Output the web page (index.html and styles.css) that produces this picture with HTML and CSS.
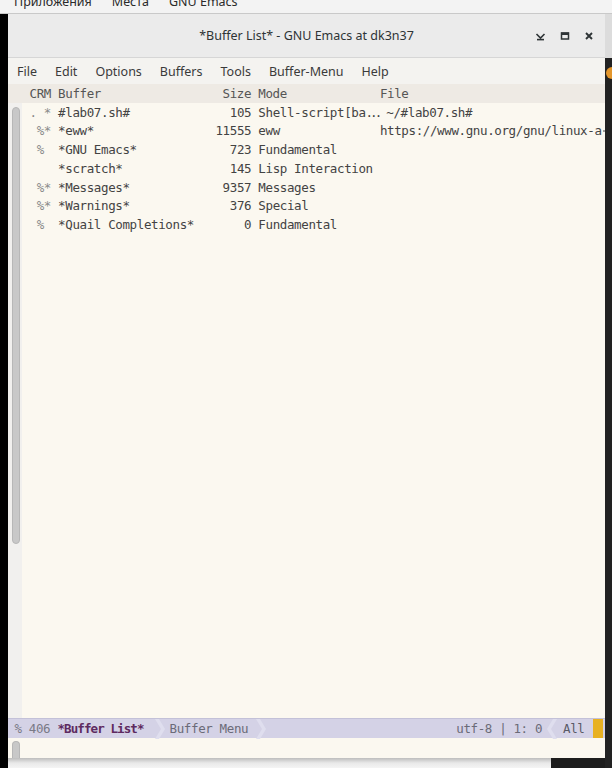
FILE: index.html
```html
<!DOCTYPE html>
<html>
<head>
<meta charset="utf-8">
<link rel="stylesheet" href="styles.css">
</head>
<body>
<div class="panel"><span>Приложения</span><span>Места</span><span>GNU Emacs</span></div>
<div class="desk">
  <div class="edge-left"></div>
  <div class="main">
    <div class="window">
      <div class="titlebar">
        <div></div>
        <div class="title">*Buffer List* - GNU Emacs at dk3n37</div>
        <div class="controls">
          <svg class="ctl" width="11" height="10" viewBox="0 0 11 10"><path d="M1.5 3 L5.5 7 L9.5 3" fill="none" stroke="#2e3436" stroke-width="1.6"/><path d="M2 8.6 H9" stroke="#2e3436" stroke-width="1.6"/></svg>
          <svg class="ctl" width="10" height="10" viewBox="0 0 10 10"><rect x="1.5" y="2" width="7" height="6" fill="none" stroke="#2e3436" stroke-width="1.5"/><rect x="1" y="1.5" width="8" height="2.5" fill="#2e3436"/></svg>
          <svg class="ctl" width="10" height="10" viewBox="0 0 10 10"><path d="M2 2 L8 8 M8 2 L2 8" stroke="#2e3436" stroke-width="1.9"/></svg>
        </div>
      </div>
      <div class="menubar">
        <span>File</span><span>Edit</span><span>Options</span><span>Buffers</span><span>Tools</span><span>Buffer-Menu</span><span>Help</span>
      </div>
      <div class="headerline"><pre class="mono">CRM Buffer                 Size Mode             File</pre></div>
      <div class="bodyrow">
        <div class="scroll"><div class="thumb"></div></div>
        <pre class="mono text"><span class="mk">. * </span>#lab07.sh#              105 Shell-script[ba<span class="ell">...</span> ~/#lab07.sh#
<span class="mk"> %* </span>*eww*                 11555 eww              https://www.gnu.org/gnu/linux-a<svg class="cont" width="6" height="8" viewBox="0 0 6 8"><path d="M0 4 H5 M2.6 1.6 L5 4 L2.6 6.4" fill="none" stroke="#444" stroke-width="1.2"/></svg>
<span class="mk"> %  </span>*GNU Emacs*             723 Fundamental
<span class="mk">    </span>*scratch*               145 Lisp Interaction
<span class="mk"> %* </span>*Messages*             9357 Messages
<span class="mk"> %* </span>*Warnings*              376 Special
<span class="mk"> %  </span>*Quail Completions*       0 Fundamental</pre>
      </div>
      <div class="modeline mono">
        <span class="ml-dim">% 406 </span><span class="ml-name">*Buffer List*</span>
        <svg class="chev chev-l" width="10" height="20" viewBox="0 0 10 20"><polygon points="0,0 4,0 10,10 4,20 0,20 6,10" fill="#dfdeee"/></svg>
        <span class="ml-mode">Buffer Menu</span>
        <svg class="chev chev-l2" width="10" height="20" viewBox="0 0 10 20"><polygon points="0,0 4,0 10,10 4,20 0,20 6,10" fill="#dfdeee"/></svg>
        <span class="spacer"></span>
        <span class="ml-mode">utf-8 | 1: 0</span>
        <svg class="chev chev-r" width="10" height="20" viewBox="0 0 10 20"><polygon points="10,0 6,0 0,10 6,20 10,20 4,10" fill="#dfdeee"/></svg>
        <span class="ml-all">All</span>
        <span class="ml-block"></span>
      </div>
      <div class="echo">
        <div class="scroll small"><div class="thumb"></div></div>
      </div>
    </div>
    <div class="below"><div class="shadow"></div><div class="dark"></div></div>
  </div>
  <div class="edge-right"><div class="lt"></div><div class="dk"><div class="dot"></div></div></div>
</div>
</body>
</html>
```
FILE: styles.css
```css
html, body {
  margin: 0;
  padding: 0;
}
body {
  width: 612px;
  height: 768px;
  overflow: hidden;
  background: #f1f1f1;
  font-family: "Noto Sans", "Open Sans", sans-serif;
}
.panel {
  height: 13px;
  border-bottom: 1px solid #c9c9c9;
  background: #f3f3f3;
  display: flex;
  align-items: flex-start;
  gap: 20px;
  padding-left: 14px;
  overflow: hidden;
  font-size: 12.5px;
  color: #2a2a2a;
}
.panel span {
  line-height: 13px;
  margin-top: -5px;
}
.desk {
  display: flex;
  height: 754px;
  background: #000;
}
.edge-left {
  flex: none;
  width: 8px;
  align-self: stretch;
  background: #000;
}
.main {
  flex: none;
  width: 597px;
  display: flex;
  flex-direction: column;
}
.window {
  height: 744px;
  display: flex;
  flex-direction: column;
  overflow: hidden;
  background: #fbf8f0;
}
.titlebar {
  height: 43px;
  border-bottom: 1px solid #d6d6d6;
  background: #ebebeb;
  display: grid;
  grid-template-columns: 1fr auto 1fr;
  align-items: center;
}
.title {
  font-size: 12.5px;
  color: #2e3436;
}
.controls {
  display: flex;
  justify-content: flex-end;
  align-items: center;
  gap: 14px;
  padding-right: 11px;
}
.ctl { display: block; }
.menubar {
  height: 26px;
  background: #f4f3f0;
  display: flex;
  align-items: center;
  gap: 18px;
  padding-left: 9px;
  font-size: 12.5px;
  color: #3a3a3a;
}
.mono {
  font-family: "DejaVu Sans Mono", "Liberation Mono", monospace;
  font-size: 12.5px;
  letter-spacing: -0.375px;
}
pre { margin: 0; }
.headerline {
  height: 19px;
  background: #eeeae4;
}
.headerline pre {
  line-height: 19px;
  padding-left: 21.5px;
  color: #555;
}
.bodyrow {
  flex: 1;
  display: flex;
  min-height: 0;
}
.scroll {
  flex: none;
  width: 14px;
  background: #f1f0ee;
  padding: 4px 0 0 4px;
  box-sizing: border-box;
}
.thumb {
  width: 8px;
  height: 437px;
  box-sizing: border-box;
  background: #c8c8c8;
  border: 1px solid #b7b7b7;
  border-radius: 4px;
}
.text {
  flex: 1;
  min-width: 0;
  padding: 0.6px 0 0 7.5px;
  line-height: 18.75px;
  color: #434343;
  overflow: hidden;
}
.mk { color: #8a8a8a; }
.ell { letter-spacing: -3px; }
.cont { vertical-align: 0; margin-left: 1px; }
.modeline {
  height: 20px;
  box-sizing: border-box;
  border-top: 1px solid #c3c1d8;
  background: #d4d2e6;
  display: flex;
  align-items: center;
  padding-left: 6.5px;
  padding-right: 2px;
  white-space: pre;
  color: #6b6b78;
}
.ml-dim { color: #7a7a86; }
.ml-name { color: #5e2a60; font-weight: bold; letter-spacing: -0.9px; }
.chev { display: block; flex: none; }
.chev-l { margin: 0 5px 0 11px; }
.chev-l2 { margin-left: 8px; }
.spacer { flex: 1; }
.chev-r { margin: 0 6px 0 5px; }
.ml-all { color: #5a5a66; }
.ml-block {
  flex: none;
  width: 10px;
  height: 19px;
  margin-left: 8.5px;
  background: #e8b122;
}
.echo {
  height: 20px;
  display: flex;
}
.scroll.small {
  background: transparent;
  padding-top: 3px;
}
.scroll.small .thumb {
  height: 17px;
  border-radius: 4px 4px 0 0;
  border-bottom: none;
}
.below {
  height: 10px;
  display: flex;
}
.shadow {
  flex: none;
  width: 543px;
  background: linear-gradient(#bdbdbd, #e9e9e9 5px, #f4f4f4);
}
.dark {
  flex: 1;
  background: #1d1d1d;
}
.edge-right {
  flex: 1;
  min-width: 0;
  display: flex;
  flex-direction: column;
  overflow: hidden;
}
.lt {
  height: 44px;
  background: #dcdcdc;
}
.dk {
  flex: 1;
  background: #222;
  overflow: hidden;
  padding-top: 9px;
}
.dot {
  width: 12px;
  height: 12px;
  border-radius: 50%;
  background: #e3962c;
  margin-left: 1px;
}
```
